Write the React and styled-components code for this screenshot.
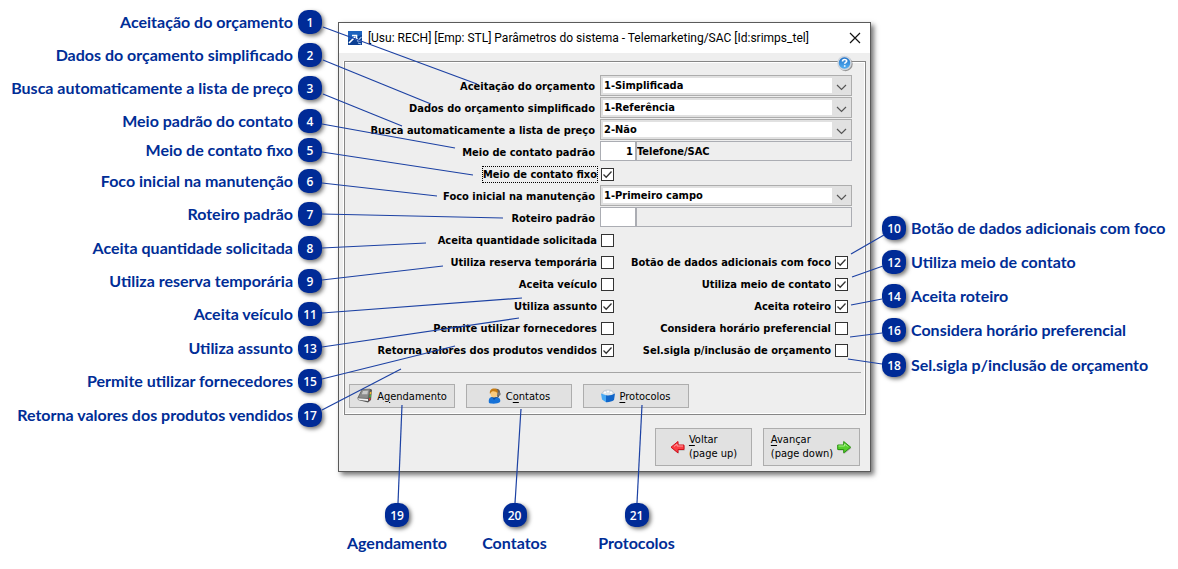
import React from "react";
import styled, { createGlobalStyle } from "styled-components";

const GlobalStyle = createGlobalStyle`
  * {
    box-sizing: border-box;
  }
  body {
    margin: 0;
    background: #fff;
    overflow-x: hidden;
  }
`;

const Scene = styled.main`
  position: relative;
  display: grid;
  grid-template-columns: 338fr 533fr 307fr;
  min-height: 569px;
  font-family: "DejaVu Sans Condensed", "DejaVu Sans", sans-serif;
  font-size: 11px;
  color: #000;
`;

const Leaders = styled.svg`
  position: absolute;
  top: 0;
  left: 0;
  width: 100%;
  height: 569px;
  pointer-events: none;

  line {
    stroke: #1c41a3;
    stroke-width: 1.2;
    vector-effect: non-scaling-stroke;
  }
`;

const SideNotes = styled.div`
  display: flex;
  flex-direction: column;
  align-items: ${props => (props.$right ? "flex-start" : "flex-end")};
  padding: ${props => (props.$right ? "216px 0 0 11px" : "10px 16px 0 0")};
`;

const Note = styled.div`
  display: flex;
  flex-direction: ${props => (props.$right ? "row-reverse" : "row")};
  align-items: center;
  gap: 5px;
  height: 24px;
  margin-bottom: ${props => props.$space}px;
`;

const NoteText = styled.span`
  color: #002d96;
  font-family: Lato, sans-serif;
  font-size: 16px;
  font-weight: 700;
  line-height: 24px;
  white-space: nowrap;
`;

const Badge = styled.span`
  display: flex;
  align-items: center;
  justify-content: center;
  flex: none;
  width: 24px;
  height: 24px;
  border-radius: 10px;
  background: #002b97;
  color: #fff;
  font-family: "Open Sans", sans-serif;
  font-size: 12px;
  font-weight: 600;
  box-shadow: 2px 2px 4px rgba(0, 0, 0, 0.55);
`;

const BottomNotes = styled.div`
  display: grid;
  grid-template-columns: 118fr 117fr 127fr 171fr;
  margin-top: 31px;
`;

const BottomNote = styled.div`
  display: flex;
  flex-direction: column;
  align-items: center;
  gap: 4px;
`;

const Dialog = styled.section`
  margin-top: 22px;
  border: 1px solid #5a5a5a;
  background: #eee;
  box-shadow: 3px 3px 5px rgba(0, 0, 0, 0.55);
`;

const TitleBar = styled.header`
  display: flex;
  align-items: center;
  height: 30px;
  padding: 0 9px;
  background: #fff;

  h1 {
    flex: 1;
    margin: 0 0 0 6px;
    font-family: Roboto, sans-serif;
    font-size: 12px;
    font-weight: 400;
    white-space: nowrap;
  }
`;

const CloseButton = styled.button`
  display: flex;
  padding: 0;
  border: 0;
  background: none;
`;

const Panel = styled.form`
  position: relative;
  margin: 8px 4px 0 5px;
  padding: 13px 0 6px;
  border: 1px solid #868686;
  box-shadow: -1px 0 0 #fff, inset -1px -1px 0 #fff, inset 0 1px 0 #fff;
`;

const HelpButton = styled.button`
  position: absolute;
  top: -7px;
  right: 12px;
  display: flex;
  padding: 0;
  border: 0;
  background: none;
`;

const FieldRow = styled.div`
  display: grid;
  grid-template-columns: 250fr 252fr;
  column-gap: 5px;
  align-items: center;
  height: 22px;
  padding-right: 13px;
  font-weight: 700;

  label {
    text-align: right;
    white-space: nowrap;
  }
`;

const Combo = styled.div`
  display: flex;
  height: 21px;
  padding: 2px 0 2px 2px;
  border: 1px solid #adadad;
  background: #e1e1e1;
  margin-bottom: 1px;

  select {
    flex: 1;
    min-width: 0;
    padding: 0 1px;
    border: 0;
    outline: 0;
    appearance: none;
    background: #fff;
    color: #000;
    font: inherit;
  }
`;

const Lookup = styled.div`
  display: flex;
  height: 20px;
  margin-bottom: 2px;
`;

const LookupInput = styled.input`
  width: ${props => (props.$code ? "36px" : "0")};
  flex: ${props => (props.$code ? "none" : "1")};
  padding: 0 2px 0 0;
  border: 1px solid #abadb3;
  outline: 0;
  background: ${props => (props.$code ? "#fff" : "#eee")};
  color: #000;
  font: inherit;
  text-align: ${props => (props.$code ? "right" : "left")};
`;

const CheckRow = styled.div`
  display: grid;
  grid-template-columns: 269fr 234fr;
  padding-right: 17px;
`;

const CheckLabel = styled.label`
  display: flex;
  align-items: center;
  justify-content: flex-end;
  gap: 4px;
  height: 22px;
  font-weight: 700;
  white-space: nowrap;
`;

const CheckText = styled.span`
  line-height: 15px;
  outline: ${props => (props.$focused ? "1px dotted #000" : "none")};
`;

const CheckBox = styled.span`
  display: grid;

  input,
  svg {
    grid-area: 1 / 1;
    width: 13px;
    height: 13px;
    margin: 0;
  }
  input {
    appearance: none;
    border: 1px solid #333;
    background: #fff;
  }
  svg {
    position: relative;
    pointer-events: none;
    visibility: hidden;
  }
  input:checked + svg {
    visibility: visible;
  }
`;

const Divider = styled.hr`
  height: 1px;
  margin: 11px 4px;
  border: 0;
  background: #a5a5a5;
`;

const ButtonBar = styled.div`
  display: flex;
  gap: 11px;
  padding-left: 4px;
`;

const PanelButton = styled.button`
  display: flex;
  align-items: center;
  justify-content: center;
  gap: 4px;
  width: 106px;
  height: 24px;
  padding: 0;
  border: 1px solid #adadad;
  background: #e1e1e1;
  color: #000;
  font-family: inherit;
  font-size: 11px;

  u {
    text-underline-offset: 2px;
  }
`;

const NavBar = styled.footer`
  display: flex;
  justify-content: flex-end;
  gap: 11px;
  padding: 13px 10px 5px;
`;

const NavButton = styled(PanelButton)`
  width: 97px;
  height: 38px;
  line-height: 14px;
  text-align: left;
`;

const leftNotes = [
  { number: 1, text: "Aceitação do orçamento", space: 9 },
  { number: 2, text: "Dados do orçamento simplificado", space: 9 },
  { number: 3, text: "Busca automaticamente a lista de preço", space: 9 },
  { number: 4, text: "Meio padrão do contato", space: 5 },
  { number: 5, text: "Meio de contato fixo", space: 7 },
  { number: 6, text: "Foco inicial na manutenção", space: 9 },
  { number: 7, text: "Roteiro padrão", space: 10 },
  { number: 8, text: "Aceita quantidade solicitada", space: 9 },
  { number: 9, text: "Utiliza reserva temporária", space: 9 },
  { number: 11, text: "Aceita veículo", space: 10 },
  { number: 13, text: "Utiliza assunto", space: 9 },
  { number: 15, text: "Permite utilizar fornecedores", space: 10 },
  { number: 17, text: "Retorna valores dos produtos vendidos", space: 0 }
];

const rightNotes = [
  { number: 10, text: "Botão de dados adicionais com foco", space: 10 },
  { number: 12, text: "Utiliza meio de contato", space: 10 },
  { number: 14, text: "Aceita roteiro", space: 10 },
  { number: 16, text: "Considera horário preferencial", space: 11 },
  { number: 18, text: "Sel.sigla p/inclusão de orçamento", space: 0 }
];

const bottomNotes = [
  { number: 19, text: "Agendamento" },
  { number: 20, text: "Contatos" },
  { number: 21, text: "Protocolos" }
];

// x1, y1, x2, y2 from the badge to the control it points at
const leaders = [
  [323, 27, 477, 84],
  [323, 60, 431, 104],
  [323, 94, 402, 126],
  [322, 124, 455, 148],
  [322, 152, 473, 175],
  [322, 183, 437, 196],
  [322, 214, 503, 218],
  [322, 248, 426, 243],
  [322, 280, 443, 266],
  [322, 313, 522, 298],
  [322, 347, 519, 318],
  [322, 379, 455, 346],
  [322, 410, 401, 369],
  [884, 235, 851, 254],
  [883, 266, 852, 277],
  [882, 299, 851, 305],
  [882, 333, 850, 337],
  [882, 364, 848, 359],
  [398, 503, 402, 405],
  [515, 503, 521, 409],
  [637, 503, 642, 405]
];

const checkRows = [
  [{ text: "Aceita quantidade solicitada" }],
  [{ text: "Utiliza reserva temporária" }, { text: "Botão de dados adicionais com foco", on: true }],
  [{ text: "Aceita veículo" }, { text: "Utiliza meio de contato", on: true }],
  [{ text: "Utiliza assunto", on: true }, { text: "Aceita roteiro", on: true }],
  [{ text: "Permite utilizar fornecedores" }, { text: "Considera horário preferencial" }],
  [{ text: "Retorna valores dos produtos vendidos", on: true }, { text: "Sel.sigla p/inclusão de orçamento" }]
];

const AppIcon = () => (
  <svg width="14" height="14" viewBox="0 0 14 14">
    <rect width="14" height="14" fill="#0b3f93" />
    <path d="M0 0h14v4L0 9z" fill="#1d62bd" />
    <path d="M1 12l6-6M4 4.500h4.500V9" stroke="#fff" strokeWidth="1.600" fill="none" />
    <path d="M13.500 6L10 9.500M9.500 7v3h4M13 13l-3-1" stroke="#a9c8ee" strokeWidth="1.100" fill="none" />
  </svg>
);

const CloseIcon = () => (
  <svg width="12" height="12" viewBox="0 0 12 12">
    <path d="M1 1l10 10M11 1L1 11" stroke="#111" strokeWidth="1.200" />
  </svg>
);

const HelpIcon = () => (
  <svg width="16" height="17" viewBox="0 0 16 17">
    <defs>
      <linearGradient id="helpFill" x1="0" y1="0" x2="0" y2="1">
        <stop offset="0" stopColor="#1f6fc6" />
        <stop offset="1" stopColor="#59b4f5" />
      </linearGradient>
    </defs>
    <ellipse cx="8.500" cy="9" rx="7.200" ry="7.200" fill="#666" opacity=".65" />
    <circle cx="7.500" cy="8" r="6.500" fill="url(#helpFill)" stroke="#d0d6de" strokeWidth="1.500" />
    <path d="M5.500 6.500c0-2.600 4.200-2.400 4.200-.5 0 1.400-2 1.300-2 2.800M7.700 10.200v1.500" stroke="#fff" strokeWidth="1.600" fill="none" />
  </svg>
);

const Chevron = () => (
  <svg width="19" height="15" viewBox="0 0 19 15" aria-hidden="true">
    <path d="M5 7l4.500 4.500L14 7" stroke="#555" strokeWidth="1.200" fill="none" />
  </svg>
);

const BookIcon = () => (
  <svg width="16" height="16" viewBox="0 0 16 16">
    <path d="M5 1.500l9-.5 1 1-1 10-3 2.500L1 12 .500 10z" fill="#555" />
    <path d="M5 1.500L13 1l-2 9.500L1 9.800z" fill="#8c8c8c" stroke="#666" strokeWidth=".6" />
    <path d="M6 3l5-.3-.7 3.600-5.500-.1z" fill="#c9c9c9" />
    <path d="M1 10.300l10 .8v2L1.500 11.800z" fill="#f4f4f4" />
    <path d="M13 4l1.500-.3-.4 2.500-1.500.3z" fill="#f4b52a" />
    <path d="M12.600 7l1.500-.3-.3 2.500-1.500.3z" fill="#49b83c" />
    <path d="M12.200 10l1.400-.3-.3 2-1.400.8z" fill="#e43b2c" />
  </svg>
);

const PersonIcon = () => (
  <svg width="14" height="16" viewBox="0 0 14 16">
    <path d="M7 1c3-1 5 1 5 3s-.5 4-2 5l-3-3z" fill="#6b6157" />
    <path d="M1 15c-1-4 1-6 3-6h4c3 0 5 2 4 5-2 2-9 2-11 1z" fill="#1672d8" />
    <path d="M4 9l2 3 3-3z" fill="#0a4ba0" />
    <ellipse cx="6" cy="5.500" rx="3.500" ry="4" fill="#f8ca7e" />
    <path d="M2 6C1 2 4 0 7 .500c3 .5 3 3 2.500 5C8.500 3.500 6 3 4 3.500 3 4 2.700 5 2 6z" fill="#c67b12" />
    <circle cx="11" cy="6" r="1.700" fill="#777" />
    <path d="M11 8l-2 1.500" stroke="#555" />
  </svg>
);

const BoxIcon = () => (
  <svg width="14" height="14" viewBox="0 0 14 14">
    <path d="M1 4c1-2 3-3 6-3s5 1 6 3l-1 3H2z" fill="#dce5eb" stroke="#b3bfca" strokeWidth=".7" />
    <path d="M3 3.500h2M6 2.500h2M9 3.500h2" stroke="#fff" strokeWidth="1.500" />
    <path d="M0 4.500l5 1.700v7L1 10.500z" fill="#46a9f5" />
    <path d="M5 6.200c3 .5 6 0 9-1.700l-1 6.500c-2 1.500-5 2.500-8 2.200z" fill="#1166c9" />
  </svg>
);

const ArrowIcon = ({ next }) => (
  <svg width="15" height="15" viewBox="0 0 15 15">
    <path
      d={next ? "M.7 5h6V1.500l7 5.700-7 5.700V9.500h-6z" : "M14 5H8V1.500L1 7.200l7 5.700V9.500h6z"}
      transform="translate(.6 1)"
      fill="#777"
      opacity=".5"
    />
    <path
      d={next ? "M.7 5h6V1.500l7 5.700-7 5.700V9.500h-6z" : "M14 5H8V1.500L1 7.200l7 5.700V9.500h6z"}
      fill={next ? "#55cf2c" : "#fb3f45"}
      stroke={next ? "#2c9212" : "#d0111c"}
    />
    <path d={next ? "M1.500 6h6V4l3 2.500" : "M13 6H7V4L4 6.500"} stroke={next ? "#a4ef86" : "#ff9ca0"} fill="none" />
  </svg>
);

const Notes = ({ items, right }) => (
  <SideNotes $right={right}>
    {items.map(item => (
      <Note key={item.number} $right={right} $space={item.space}>
        <NoteText>{item.text}</NoteText>
        <Badge>{item.number}</Badge>
      </Note>
    ))}
  </SideNotes>
);

const SelectField = ({ id, label, value }) => (
  <FieldRow>
    <label htmlFor={id}>{label}</label>
    <Combo>
      <select id={id} defaultValue={value}>
        <option>{value}</option>
      </select>
      <Chevron />
    </Combo>
  </FieldRow>
);

const LookupField = ({ id, label, code, description }) => (
  <FieldRow>
    <label htmlFor={id}>{label}</label>
    <Lookup>
      <LookupInput id={id} $code defaultValue={code} />
      <LookupInput aria-label={`${label} descrição`} readOnly value={description} />
    </Lookup>
  </FieldRow>
);

const CheckField = ({ text, on, focused }) => (
  <CheckLabel>
    <CheckText $focused={focused}>{text}</CheckText>
    <CheckBox>
      <input type="checkbox" defaultChecked={on} />
      <svg viewBox="0 0 13 13">
        <path d="M2.500 6.500l2.700 2.700 5.300-5.700" stroke="#333" strokeWidth="1.300" fill="none" />
      </svg>
    </CheckBox>
  </CheckLabel>
);

const App = () => {
  return (
    <Scene>
      <GlobalStyle />
      <Notes items={leftNotes} />
      <div>
        <Dialog>
          <TitleBar>
            <AppIcon />
            <h1>[Usu: RECH] [Emp: STL] Parâmetros do sistema - Telemarketing/SAC [Id:srimps_tel]</h1>
            <CloseButton type="button" aria-label="Fechar">
              <CloseIcon />
            </CloseButton>
          </TitleBar>
          <Panel>
            <HelpButton type="button" aria-label="Ajuda">
              <HelpIcon />
            </HelpButton>
            <SelectField id="aceitacao" label="Aceitação do orçamento" value="1-Simplificada" />
            <SelectField id="dados" label="Dados do orçamento simplificado" value="1-Referência" />
            <SelectField id="busca" label="Busca automaticamente a lista de preço" value="2-Não" />
            <LookupField id="meio" label="Meio de contato padrão" code="1" description="Telefone/SAC" />
            <CheckRow>
              <CheckField text="Meio de contato fixo" on focused />
            </CheckRow>
            <SelectField id="foco" label="Foco inicial na manutenção" value="1-Primeiro campo" />
            <LookupField id="roteiro" label="Roteiro padrão" code="" description="" />
            {checkRows.map(row => (
              <CheckRow key={row[0].text}>
                {row.map(item => (
                  <CheckField key={item.text} text={item.text} on={item.on} />
                ))}
              </CheckRow>
            ))}
            <Divider />
            <ButtonBar>
              <PanelButton type="button">
                <BookIcon />
                <span>A<u>g</u>endamento</span>
              </PanelButton>
              <PanelButton type="button">
                <PersonIcon />
                <span>C<u>o</u>ntatos</span>
              </PanelButton>
              <PanelButton type="button">
                <BoxIcon />
                <span><u>P</u>rotocolos</span>
              </PanelButton>
            </ButtonBar>
          </Panel>
          <NavBar>
            <NavButton type="button">
              <ArrowIcon />
              <span><u>V</u>oltar<br />(page up)</span>
            </NavButton>
            <NavButton type="button">
              <span><u>A</u>vançar<br />(page down)</span>
              <ArrowIcon next />
            </NavButton>
          </NavBar>
        </Dialog>
        <BottomNotes>
          {bottomNotes.map(item => (
            <BottomNote key={item.number}>
              <Badge>{item.number}</Badge>
              <NoteText>{item.text}</NoteText>
            </BottomNote>
          ))}
        </BottomNotes>
      </div>
      <Notes items={rightNotes} right />
      <Leaders viewBox="0 0 1178 569" preserveAspectRatio="none" aria-hidden="true">
        {leaders.map(([x1, y1, x2, y2]) => (
          <line key={`${x1}-${y1}`} x1={x1} y1={y1} x2={x2} y2={y2} />
        ))}
      </Leaders>
    </Scene>
  );
};

export default App;
